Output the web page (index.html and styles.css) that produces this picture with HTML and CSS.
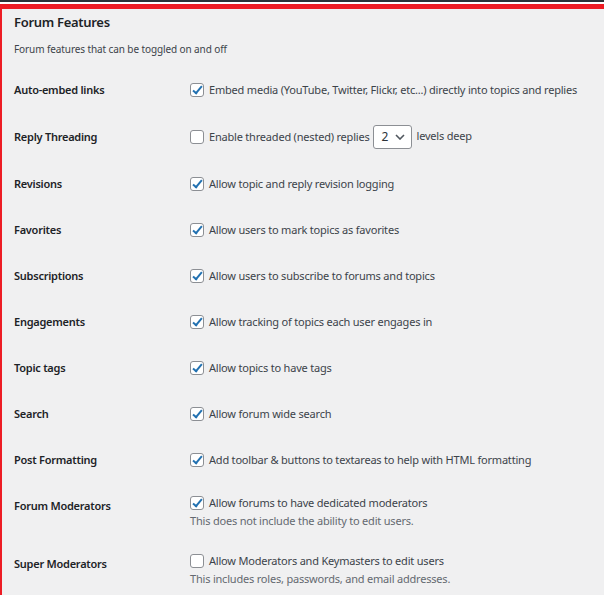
FILE: index.html
```html
<!DOCTYPE html>
<html lang="en">
<head>
  <meta charset="UTF-8" />
  <title>Forum Features</title>
  <link rel="stylesheet" href="styles.css">
</head>
<body>
  <div class="topbar"></div>
  <div class="frame">
    <h2>Forum Features</h2>
    <p class="intro">Forum features that can be toggled on and off</p>

    <div class="form-table">
      <div class="row">
        <div class="th">Auto-embed links</div>
        <div class="td">
          <label><span class="cb checked"></span>Embed media (YouTube, Twitter, Flickr, etc...) directly into topics and replies</label>
        </div>
      </div>

      <div class="row tall">
        <div class="th">Reply Threading</div>
        <div class="td">
          <label><span class="cb"></span>Enable threaded (nested) replies</label>
          <div class="select">2
            <svg width="10" height="6" viewBox="0 0 10 6"><path d="M1 1l4 4 4-4" fill="none" stroke="#50575e" stroke-width="1.6"/></svg>
          </div>
          <span class="after">levels deep</span>
        </div>
      </div>

      <div class="row">
        <div class="th">Revisions</div>
        <div class="td"><label><span class="cb checked"></span>Allow topic and reply revision logging</label></div>
      </div>

      <div class="row">
        <div class="th">Favorites</div>
        <div class="td"><label><span class="cb checked"></span>Allow users to mark topics as favorites</label></div>
      </div>

      <div class="row">
        <div class="th">Subscriptions</div>
        <div class="td"><label><span class="cb checked"></span>Allow users to subscribe to forums and topics</label></div>
      </div>

      <div class="row">
        <div class="th">Engagements</div>
        <div class="td"><label><span class="cb checked"></span>Allow tracking of topics each user engages in</label></div>
      </div>

      <div class="row">
        <div class="th">Topic tags</div>
        <div class="td"><label><span class="cb checked"></span>Allow topics to have tags</label></div>
      </div>

      <div class="row">
        <div class="th">Search</div>
        <div class="td"><label><span class="cb checked"></span>Allow forum wide search</label></div>
      </div>

      <div class="row">
        <div class="th">Post Formatting</div>
        <div class="td"><label><span class="cb checked"></span>Add toolbar &amp; buttons to textareas to help with HTML formatting</label></div>
      </div>

      <div class="row multi">
        <div class="th">Forum Moderators</div>
        <div class="td">
          <label><span class="cb checked"></span>Allow forums to have dedicated moderators</label>
          <p class="description">This does not include the ability to edit users.</p>
        </div>
      </div>

      <div class="row multi">
        <div class="th">Super Moderators</div>
        <div class="td">
          <label><span class="cb"></span>Allow Moderators and Keymasters to edit users</label>
          <p class="description">This includes roles, passwords, and email addresses.</p>
        </div>
      </div>
    </div>
  </div>
</body>
</html>
```

FILE: styles.css
```css
body {
  margin: 0;
  background: #f0f0f1;
  color: #1d2327;
  font-family: "Noto Sans", sans-serif;
  font-size: 11px;
  letter-spacing: -0.2px;
  overflow: hidden;
}
.topbar {
  height: 2px;
  background: #2c3338;
  border-bottom: 2px solid #fff;
}
.frame {
  border-top: 5px solid #ed1c24;
  border-left: 2px solid #ed1c24;
  padding: 3px 0 0 12px;
  height: 600px;
}
h2 {
  margin: 0;
  font-size: 13px;
  font-weight: 600;
  line-height: 20px;
  letter-spacing: -0.3px;
}
.intro {
  margin: 9px 0 0;
  font-size: 10px;
  line-height: 16px;
  letter-spacing: -0.1px;
  color: #3c434a;
}
.form-table {
  margin-top: 10px;
}
.row {
  display: grid;
  grid-template-columns: 176px 1fr;
  align-items: center;
  height: 46px;
}
.row.tall {
  height: 48px;
}
.row.multi {
  height: 58px;
  align-items: start;
}
.th {
  font-weight: 600;
  line-height: 16px;
  letter-spacing: -0.25px;
}
.row.multi .th {
  padding-top: 15px;
}
.td {
  display: flex;
  align-items: center;
  flex-wrap: wrap;
  color: #3c434a;
  line-height: 16px;
}
.row.multi .td {
  display: block;
  padding-top: 12px;
}
label {
  display: flex;
  align-items: center;
}
.cb {
  width: 12px;
  height: 12px;
  border: 1px solid #8c8f94;
  border-radius: 3px;
  background: #fff;
  margin-right: 5px;
  position: relative;
  box-sizing: content-box;
}
.cb.checked::after {
  content: "";
  position: absolute;
  left: 4px;
  top: 0px;
  width: 3px;
  height: 8px;
  border: solid #2271b1;
  border-width: 0 2px 2px 0;
  transform: rotate(40deg);
}
.select {
  display: flex;
  align-items: center;
  justify-content: space-between;
  box-sizing: border-box;
  width: 39px;
  height: 24px;
  margin: 0 5px 0 3px;
  padding: 0 6px 0 8px;
  border: 1px solid #8c8f94;
  border-radius: 3px;
  background: #fff;
  font-size: 12px;
  color: #2c3338;
}
.after {
  margin-top: -2px;
}
.description {
  margin: 2px 0 0;
  color: #646970;
}
```
